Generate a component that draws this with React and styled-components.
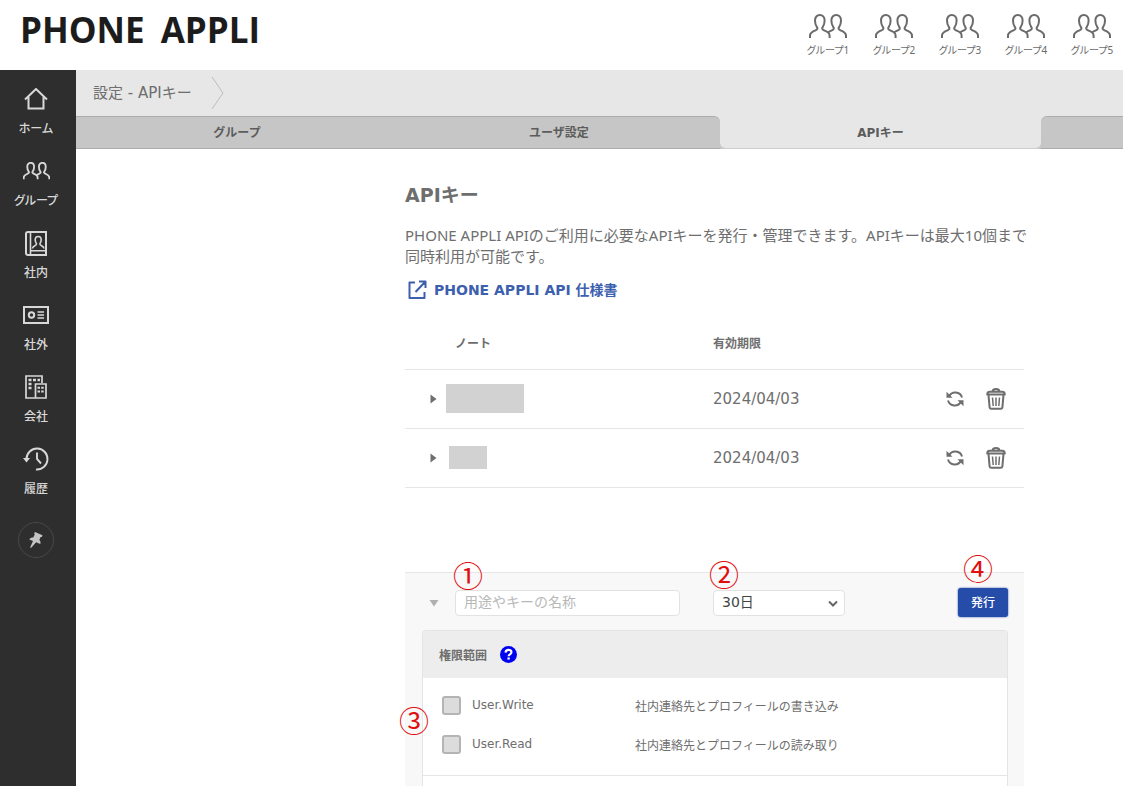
import React from "react";
import styled, { createGlobalStyle } from "styled-components";

const GlobalStyle = createGlobalStyle`
  *, *::before, *::after { box-sizing: border-box; }
  body {
    margin: 0;
    background: #fff;
    color: #6e6e6e;
    font-family: "DejaVu Sans", "Noto Sans CJK JP", sans-serif;
    font-size: 14px;
  }
  button, input, select { font: inherit; }
`;

const Shell = styled.div`
  min-height: 100vh;
  display: flex;
  flex-direction: column;
`;

const Header = styled.header`
  display: flex;
  align-items: flex-start;
  justify-content: space-between;
  height: 70px;
  padding-left: 20px;
  overflow: hidden;
`;

const Logo = styled.div`
  display: flex;
  gap: 16px;
  padding-top: 5px;
  color: #1c1c1c;
  font-family: "Open Sans", sans-serif;
  font-size: 35px;
  font-weight: 700;
  line-height: 50px;
`;

const GroupNav = styled.nav`
  display: flex;
  gap: 4px;
  padding-top: 14px;
`;

const GroupLink = styled.a`
  display: flex;
  flex-direction: column;
  align-items: center;
  gap: 4px;
  width: 62px;
  color: #6b6b6b;
  font-family: "Noto Sans", "Noto Sans CJK JP", sans-serif;
  font-size: 10px;
  line-height: 14px;
  text-decoration: none;
  white-space: nowrap;
  font-feature-settings: "palt";
`;

const Body = styled.div`
  flex: 1;
  display: flex;
`;

const Sidebar = styled.nav`
  flex: 0 0 76px;
  display: flex;
  flex-direction: column;
  align-items: center;
  padding: 14px 4px 0 0;
  background: #2e2e2e;
`;

const SideLink = styled.a`
  display: flex;
  flex-direction: column;
  align-items: center;
  gap: 6px;
  height: 72px;
  color: #d8d8d8;
  font-family: "Noto Sans", "Noto Sans CJK JP", sans-serif;
  font-size: 12px;
  font-weight: 500;
  line-height: 18px;
  text-decoration: none;
  white-space: nowrap;
  font-feature-settings: "palt";
`;

const SideIcon = styled.span`
  display: flex;
  align-items: center;
  justify-content: center;
  height: 30px;
`;

const PinButton = styled.button`
  display: flex;
  align-items: center;
  justify-content: center;
  width: 36px;
  height: 36px;
  margin-top: 6px;
  padding: 0;
  border: 1px solid #484848;
  border-radius: 50%;
  background: none;
  color: #c4c4c4;
`;

const Main = styled.main`
  flex: 1;
  min-width: 0;
  display: flex;
  flex-direction: column;
`;

const Breadcrumb = styled.div`
  display: flex;
  align-items: center;
  gap: 19px;
  height: 46px;
  padding-left: 17px;
  background: #e7e7e7;
  font-size: 15px;
`;

const Crumb = styled.span`
  padding-bottom: 4px;
`;

const Tabs = styled.div`
  display: flex;
  height: 33px;
  overflow: hidden;
  background: linear-gradient(#e7e7e7 50%, #c6c6c6 50%);
`;

const Tab = styled.button`
  flex: 0 0 ${(p) => (p.$active ? 321 : 322)}px;
  padding: 0 0 2px;
  border: 0 solid #acacac;
  border-top-width: ${(p) => (p.$active ? 0 : 1)}px;
  border-bottom-width: 1px;
  border-bottom-color: ${(p) => (p.$active ? "#cfcfcf" : "#acacac")};
  border-radius: ${(p) => p.$radius || "0"};
  background: ${(p) => (p.$active ? "#e7e7e7" : "#c6c6c6")};
  color: #5c5c5c;
  font-size: 12px;
  font-weight: 600;
`;

const Content = styled.div`
  flex: 1;
  display: flex;
  flex-direction: column;
  padding: 32px 99px 0 329px;
`;

const Title = styled.h1`
  margin: 0;
  font-size: 19px;
  font-weight: 700;
  line-height: 28px;
`;

const Lead = styled.p`
  margin: 16px 0 0;
  font-family: "Noto Sans", "Noto Sans CJK JP", sans-serif;
  font-size: 15px;
  line-height: 21px;
  white-space: nowrap;
`;

const SpecLink = styled.a`
  display: flex;
  align-items: center;
  gap: 6px;
  margin-top: 11px;
  padding-left: 2px;
  color: #3c60ae;
  font-weight: 700;
  line-height: 24px;
  text-decoration: none;
`;

const KeyTable = styled.table`
  width: 100%;
  margin-top: 14px;
  border-collapse: collapse;
  table-layout: fixed;
  text-align: left;
`;

const HeadCell = styled.th`
  width: ${(p) => p.$width || "auto"};
  height: 53px;
  padding: 0 0 0 ${(p) => p.$indent || 0}px;
  border-bottom: 1px solid #e6e6e6;
  font-size: 12px;
  font-weight: 700;
`;

const Cell = styled.td`
  height: 59px;
  padding: 0;
  border-bottom: 1px solid #e6e6e6;
  font-size: 15px;
`;

const NoteBox = styled.div`
  display: flex;
  align-items: center;
  gap: ${(p) => p.$gap}px;
  padding-left: 24px;
`;

const Masked = styled.span`
  width: ${(p) => p.$width}px;
  height: ${(p) => p.$height}px;
  background: #d2d2d2;
`;

const Actions = styled.div`
  display: flex;
  align-items: center;
  justify-content: flex-end;
  gap: 22px;
  padding-right: 18px;
`;

const IconButton = styled.button`
  display: flex;
  padding: 0;
  border: 0;
  background: none;
  color: #6e6e6e;
`;

const IssuePanel = styled.form`
  flex: 1;
  display: flex;
  flex-direction: column;
  margin-top: 84px;
  padding: 15px 16px 0 17px;
  border-top: 1px solid #e6e6e6;
  background: #f8f8f8;
`;

const IssueRow = styled.div`
  display: flex;
  align-items: center;
  height: 30px;
`;

const Field = styled.div`
  position: relative;
  display: flex;
  width: ${(p) => p.$width}px;
  margin-left: ${(p) => p.$gap}px;
`;

const NameInput = styled.input`
  width: 100%;
  height: 26px;
  padding: 0 8px 2px;
  border: 1px solid #e2e2e2;
  border-radius: 4px;
  background: #fff;
  color: #444;
  font-size: 14px;
  &::placeholder { color: #b8b8b8; opacity: 1; }
`;

const TermSelect = styled.select`
  width: 100%;
  height: 26px;
  padding: 0 8px 2px;
  appearance: none;
  border: 1px solid #e2e2e2;
  border-radius: 4px;
  background: #fff;
  color: #444;
  font-size: 14px;
`;

const SelectArrow = styled.svg`
  position: absolute;
  right: 7px;
  top: 10px;
  pointer-events: none;
`;

const SubmitField = styled.div`
  position: relative;
  margin-left: auto;
`;

const SubmitButton = styled.button`
  display: block;
  width: 50px;
  height: 29px;
  padding: 0 0 2px;
  border: 0;
  border-radius: 3px;
  background: #254ca9;
  box-shadow: 0 0 2px #254ca9;
  color: #fff;
  font-size: 12px;
  font-weight: 500;
`;

const Marker = styled.span`
  position: absolute;
  left: ${(p) => p.$left}px;
  top: ${(p) => p.$top}px;
  color: #e01010;
  font-family: "Noto Sans CJK JP", sans-serif;
  font-size: 30px;
  font-weight: 400;
  line-height: 30px;
`;

const ScopeCard = styled.section`
  position: relative;
  flex: 1;
  margin-top: 12px;
  border: 1px solid #e4e4e4;
  border-bottom: 0;
  border-radius: 4px 4px 0 0;
  background: #fff;
`;

const ScopeHead = styled.div`
  display: flex;
  align-items: center;
  gap: 13px;
  height: 47px;
  padding-left: 16px;
  border-radius: 3px 3px 0 0;
  background: #ededed;
`;

const ScopeTitle = styled.h2`
  margin: 0;
  font-size: 12px;
  font-weight: 700;
`;

const ScopeList = styled.div`
  padding: 8px 0 11px 19px;
  border-bottom: 1px solid #e6e6e6;
`;

const ScopeRow = styled.label`
  display: grid;
  grid-template-columns: 19px 152px 1fr;
  column-gap: 11px;
  align-items: center;
  height: 39px;
  font-size: 12px;
`;

const ScopeCheck = styled.input`
  width: 19px;
  height: 19px;
  margin: 0;
  appearance: none;
  border: 2px solid #b4b4b4;
  border-radius: 3px;
  background: #dcdcdc;
`;

function PeopleIcon({ width, stroke }) {
  const height = Math.round((width * 25) / 38);
  return (
    <svg width={width} height={height} viewBox="0 0 38 25" fill="none" stroke="currentColor" strokeWidth={stroke}>
      <path d="M1 24v-2.500c0-3 3-4 5.500-5.200 2-1 2.500-1.800 1.300-3.500C6.300 10.800 6 8.800 6 6.500 6 3.200 8 1 10.800 1s4.800 2.200 4.800 5.500c0 2.300-.3 4.300-1.800 6.300-1.200 1.700-.7 2.500 1.300 3.500 1.600.8 3 1.300 4 2.200 1 .9 1.500 1.800 1.500 3V24" />
      <path d="M19.100 18.500c.9-.9 2.300-1.400 3.800-2.200 2-1 2.500-1.800 1.300-3.500-1.500-2-1.800-4-1.800-6.300C22.400 3.200 24.400 1 27.200 1S32 3.200 32 6.500c0 2.300-.3 4.300-1.800 6.300-1.200 1.700-.7 2.500 1.300 3.500 2.500 1.200 5.500 2.200 5.500 5.200V24" />
    </svg>
  );
}

const HomeIcon = () => (
  <svg width="24" height="23" viewBox="0 0 24 23" fill="none" stroke="currentColor" strokeWidth="2">
    <path d="M1 11.500 12 1l11 10.500M4.500 9v11.500h15V9" />
  </svg>
);

const BookIcon = () => (
  <svg width="22" height="25" viewBox="0 0 22 25" fill="none" stroke="currentColor">
    <path strokeWidth="2" d="M3 1h18v23H3a2 2 0 0 1-2-2V3a2 2 0 0 1 2-2Z" />
    <path strokeWidth="1.600" d="M5.500 1v23M5.500 19.800H21M7.500 17.500c0-3 4-2.500 4-4.500 0-1-1.300-1.700-1.300-4 0-2 1.100-3.500 3-3.500s3 1.500 3 3.500c0 2.300-1.300 3-1.300 4 0 2 4 1.500 4 4.500" />
  </svg>
);

const CardIcon = () => (
  <svg width="26" height="18" viewBox="0 0 26 18" fill="none" stroke="currentColor" strokeWidth="2">
    <path d="M1 1h24v16H1z" />
    <circle cx="8.500" cy="9" r="2.700" />
    <path strokeWidth="1.600" d="M14.500 6H21M14.500 9H21M14.500 12H21" />
  </svg>
);

const BuildingIcon = () => (
  <svg width="22" height="24" viewBox="0 0 22 24" fill="none" stroke="currentColor" strokeWidth="1.700">
    <path d="M11 23H1V1h16v7M10.500 9H21v14H10.500z" />
    <path strokeWidth="2.500" strokeDasharray="3 1.500" d="M3.500 5H15" />
    <path strokeWidth="2.500" strokeDasharray="3 1.500" d="M3.500 9H7M3.500 13H7" />
    <path strokeWidth="2" strokeDasharray="2.500 1.200" d="M12.500 12.800h7M12.500 16.500h7" />
  </svg>
);

const HistoryIcon = () => (
  <svg width="26" height="24" viewBox="0 0 26 24" fill="none" stroke="currentColor" strokeWidth="1.900">
    <path d="M3.500 12A10.500 10.500 0 1 1 13 22.500M14 5.500V12l4 4.500" />
    <path d="M0 11h7l-3.500 4.500z" fill="currentColor" stroke="none" />
  </svg>
);

const PinIcon = () => (
  <svg width="16" height="18" viewBox="0 0 16 18" fill="currentColor">
    <path d="m7 1 7.500 3.200-.7 1.900-1.200-.2-1.300 3.200c1.200 1 1.500 2.400 1 4L8.100 11.300 3.500 16.500l-1.200.4.200-1.300L5 10 1.300 8.400C2.200 6.900 3.600 6.300 5.300 6.400l1.500-3.100-.7-.8z" />
  </svg>
);

const RefreshIcon = () => (
  <svg width="18" height="18" viewBox="0 0 18 18" fill="none" stroke="currentColor" strokeWidth="2">
    <path d="M3 6.500a7 7 0 0 1 13 1M15 11.500a7 7 0 0 1-13-1" />
    <path d="M.5 1.800v6h6zM17.500 16.200v-6h-6z" fill="currentColor" stroke="none" />
  </svg>
);

const TrashIcon = () => (
  <svg width="20" height="22" viewBox="0 0 20 22" fill="none" stroke="currentColor" strokeLinejoin="round">
    <path strokeWidth="2" d="M1.200 6.500c0-2 .8-2.800 2.500-2.800h12.600c1.700 0 2.500.8 2.500 2.800zM6.500 3.500C6.800 1.700 7.500 1 10 1s3.200.7 3.500 2.500M2.500 6.800 3.600 19.300c.1 1 .8 1.500 1.800 1.500h9.200c1 0 1.700-.5 1.800-1.500L17.500 6.800" />
    <path strokeWidth="1.500" d="m6.500 9.500.7 8.500M10 9.500V18M13.500 9.500l-.7 8.500" />
  </svg>
);

const ExternalIcon = () => (
  <svg width="21" height="20" viewBox="0 0 21 20" fill="none" stroke="currentColor" strokeWidth="2" strokeLinejoin="round">
    <path d="M8 2.500H2.500V18h15v-6M12 1.500h6.500V8M18.500 1.500 8.500 12" />
  </svg>
);

const HelpIcon = () => (
  <svg width="17" height="17" viewBox="0 0 16 16" role="img" aria-label="help">
    <circle cx="8" cy="8" r="8" fill="#0000f0" />
    <path d="M5.200 6.200C5.300 4.500 6.400 3.600 8 3.600s2.800.9 2.800 2.300c0 2-2.700 1.800-2.700 3.700" fill="none" stroke="#fff" strokeWidth="2" />
    <path d="M7 10.800h2.200v2H7z" fill="#fff" />
  </svg>
);

const sideItems = [
  ["ホーム", <HomeIcon />],
  ["グループ", <PeopleIcon width={27} stroke={2.6} />],
  ["社内", <BookIcon />],
  ["社外", <CardIcon />],
  ["会社", <BuildingIcon />],
  ["履歴", <HistoryIcon />],
];

const keys = [
  { width: 78, height: 29, gap: 9, expires: "2024/04/03" },
  { width: 38, height: 23, gap: 12, expires: "2024/04/03" },
];

const scopes = [
  ["User.Write", "社内連絡先とプロフィールの書き込み"],
  ["User.Read", "社内連絡先とプロフィールの読み取り"],
];

export default function App() {
  return (
    <Shell>
      <GlobalStyle />
      <Header>
        <Logo><span>PHONE</span><span>APPLI</span></Logo>
        <GroupNav>
          {[1, 2, 3, 4, 5].map((n) => (
            <GroupLink href="#" key={n}>
              <PeopleIcon width={38} stroke={2} />
              {`グループ${n}`}
            </GroupLink>
          ))}
        </GroupNav>
      </Header>
      <Body>
        <Sidebar>
          {sideItems.map(([label, icon]) => (
            <SideLink href="#" key={label}>
              <SideIcon>{icon}</SideIcon>
              {label}
            </SideLink>
          ))}
          <PinButton type="button" aria-label="pin"><PinIcon /></PinButton>
        </Sidebar>
        <Main>
          <Breadcrumb>
            <Crumb>設定 - APIキー</Crumb>
            <svg width="14" height="34" viewBox="0 0 14 34" fill="none" stroke="#bdbdbd">
              <path d="M1 1l11 16L1 33" />
            </svg>
          </Breadcrumb>
          <Tabs>
            <Tab type="button">グループ</Tab>
            <Tab type="button" $radius="0 6px 0 0">ユーザ設定</Tab>
            <Tab type="button" $active $radius="0 0 6px 6px">APIキー</Tab>
            <Tab type="button" $radius="6px 0 0 0" aria-label="next" />
          </Tabs>
          <Content>
            <Title>APIキー</Title>
            <Lead>
              PHONE APPLI APIのご利用に必要なAPIキーを発行・管理できます。APIキーは最大10個まで<br />
              同時利用が可能です。
            </Lead>
            <SpecLink href="#"><ExternalIcon />PHONE APPLI API 仕様書</SpecLink>
            <KeyTable>
              <thead>
                <tr>
                  <HeadCell $indent={50} $width="308px">ノート</HeadCell>
                  <HeadCell>有効期限</HeadCell>
                  <HeadCell $width="120px" />
                </tr>
              </thead>
              <tbody>
                {keys.map((k) => (
                  <tr key={k.width}>
                    <Cell>
                      <NoteBox $gap={k.gap}>
                        <IconButton type="button" aria-label="expand">
                          <svg width="8" height="10" viewBox="0 0 8 10" fill="currentColor"><path d="M1.500.5 7.500 5l-6 4.500z" /></svg>
                        </IconButton>
                        <Masked $width={k.width} $height={k.height} />
                      </NoteBox>
                    </Cell>
                    <Cell>{k.expires}</Cell>
                    <Cell>
                      <Actions>
                        <IconButton type="button" aria-label="refresh"><RefreshIcon /></IconButton>
                        <IconButton type="button" aria-label="delete"><TrashIcon /></IconButton>
                      </Actions>
                    </Cell>
                  </tr>
                ))}
              </tbody>
            </KeyTable>
            <IssuePanel>
              <IssueRow>
                <Field $width={10} $gap={7}>
                  <svg width="10" height="8" viewBox="0 0 10 8" fill="#b0b0b0"><path d="M.5 1h9L5 7.500z" /></svg>
                </Field>
                <Field $width={225} $gap={16}>
                  <NameInput aria-label="ノート" placeholder="用途やキーの名称" />
                  <Marker $left={-2} $top={-31}>①</Marker>
                </Field>
                <Field $width={132} $gap={33}>
                  <TermSelect aria-label="有効期限"><option>30日</option></TermSelect>
                  <SelectArrow width="10" height="8" viewBox="0 0 10 8" fill="none" stroke="#666" strokeWidth="2">
                    <path d="m1 1.500 4 4 4-4" />
                  </SelectArrow>
                  <Marker $left={-4} $top={-32}>②</Marker>
                </Field>
                <SubmitField>
                  <SubmitButton type="button">発行</SubmitButton>
                  <Marker $left={5} $top={-36}>④</Marker>
                </SubmitField>
              </IssueRow>
              <ScopeCard>
                <Marker $left={-24} $top={73}>③</Marker>
                <ScopeHead>
                  <ScopeTitle>権限範囲</ScopeTitle>
                  <HelpIcon />
                </ScopeHead>
                <ScopeList>
                  {scopes.map(([name, text]) => (
                    <ScopeRow key={name}>
                      <ScopeCheck type="checkbox" />
                      <span>{name}</span>
                      <span>{text}</span>
                    </ScopeRow>
                  ))}
                </ScopeList>
              </ScopeCard>
            </IssuePanel>
          </Content>
        </Main>
      </Body>
    </Shell>
  );
}
